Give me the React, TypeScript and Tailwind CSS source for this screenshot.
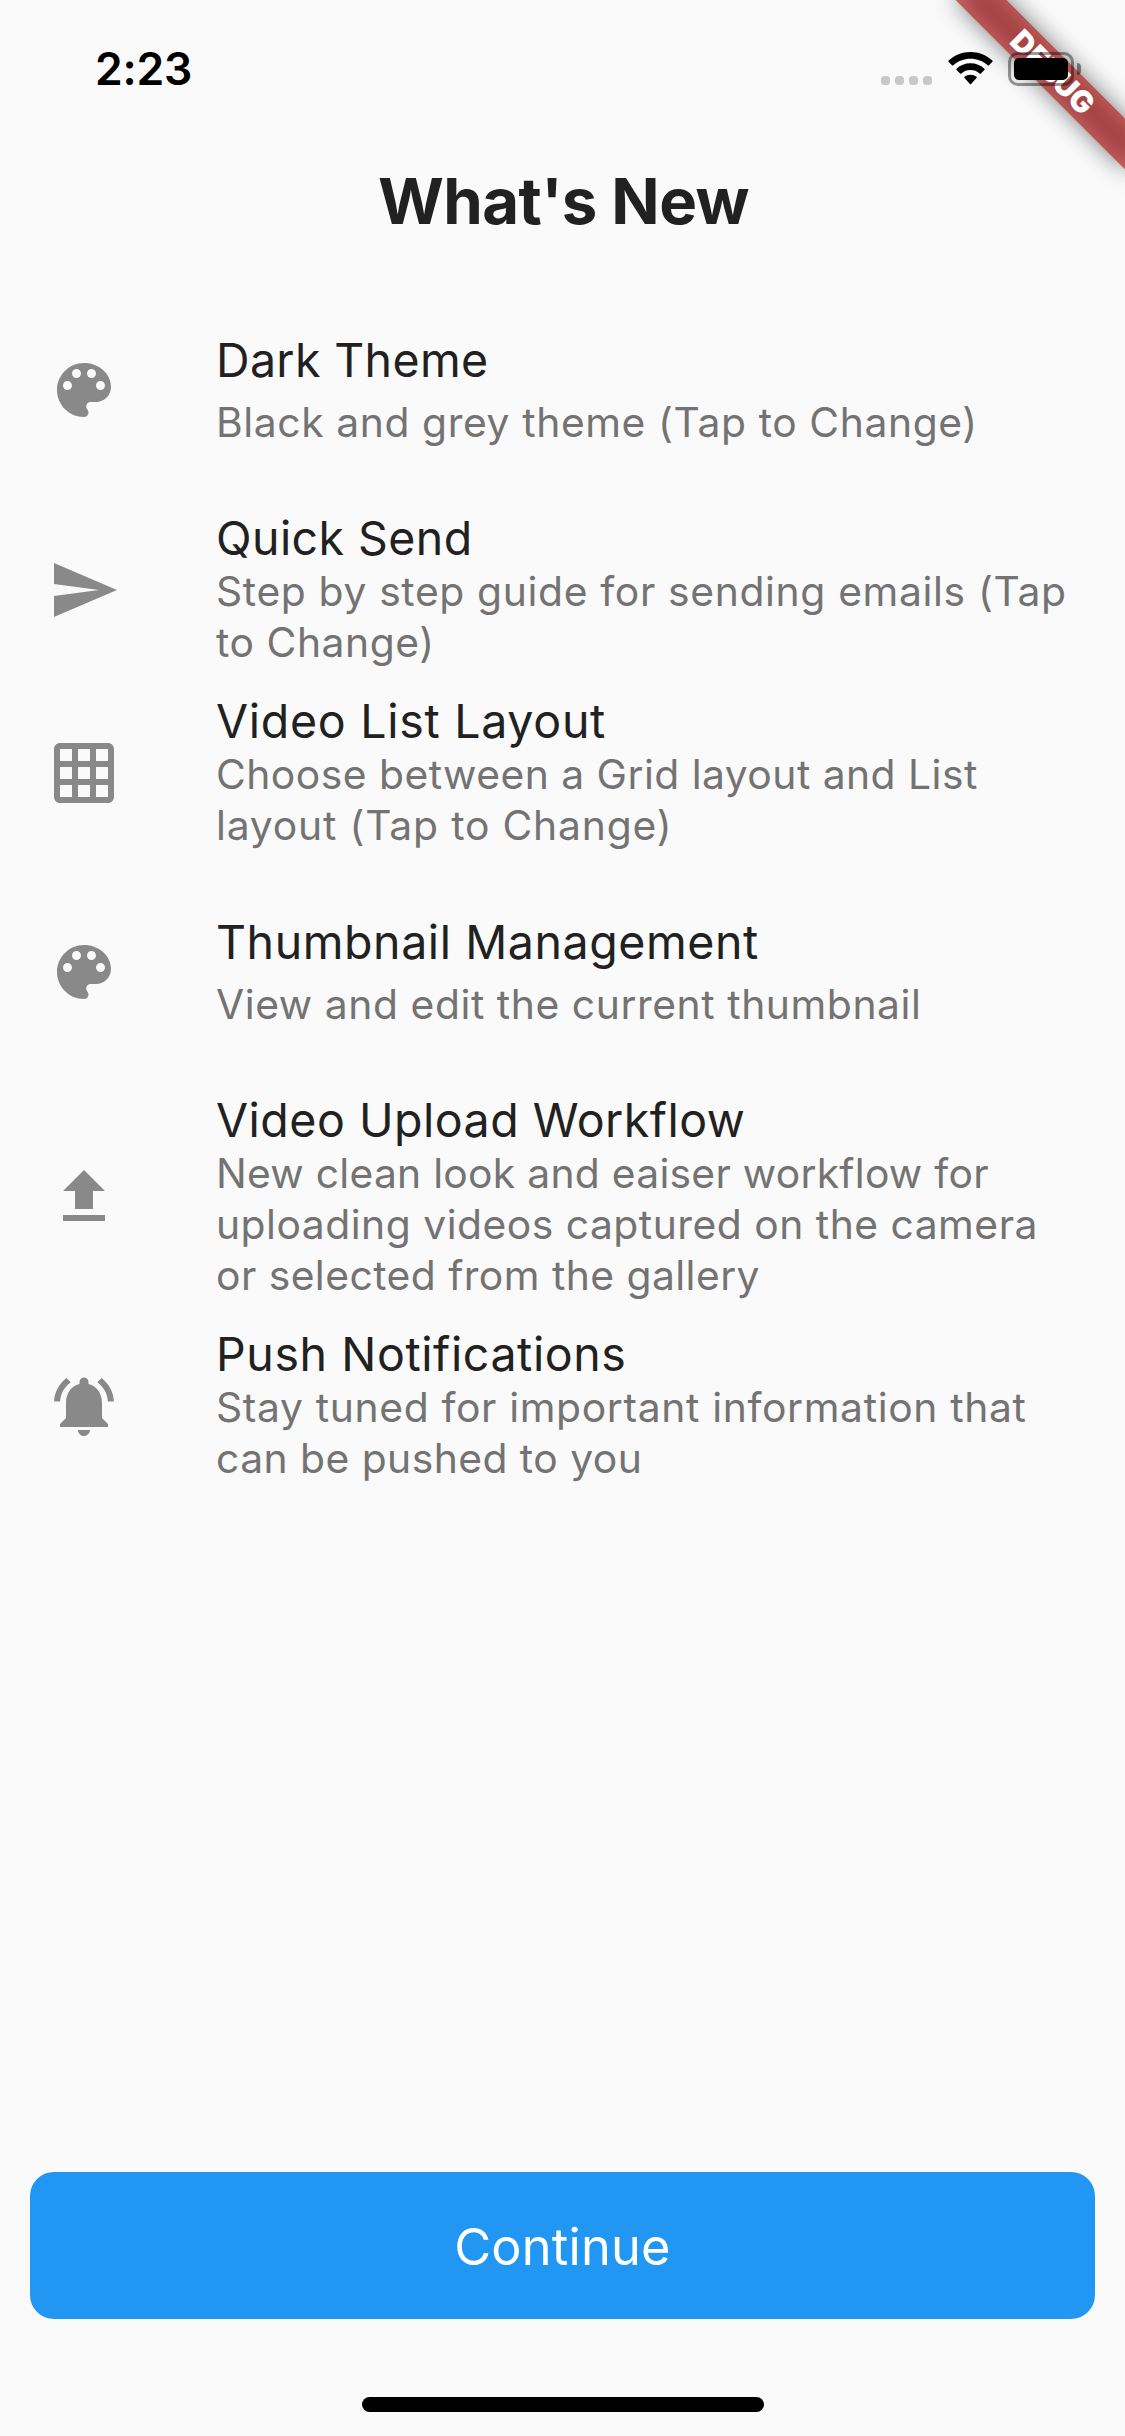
type Line = { text: string; tracking: string };

type Feature = {
  icon: string;
  title: Line;
  lines: Line[];
};

const PALETTE =
  "M12 3c-4.97 0-9 4.03-9 9s4.03 9 9 9c.83 0 1.5-.67 1.5-1.5 0-.39-.15-.74-.39-1.01-.23-.26-.38-.61-.38-.99 0-.83.67-1.5 1.5-1.5H16c2.76 0 5-2.24 5-5 0-4.42-4.03-8-9-8zm-5.5 9c-.83 0-1.5-.67-1.5-1.5S5.67 9 6.5 9 8 9.67 8 10.5 7.33 12 6.5 12zm3-4C8.67 8 8 7.33 8 6.5S8.67 5 9.5 5s1.5.67 1.5 1.5S10.33 8 9.5 8zm5 0c-.83 0-1.5-.67-1.5-1.5S13.67 5 14.5 5s1.5.67 1.5 1.5S15.33 8 14.5 8zm3 4c-.83 0-1.5-.67-1.5-1.5S16.67 9 17.5 9s1.5.67 1.5 1.5-.67 1.5-1.5 1.5z";
const SEND = "M2.01 21L23 12 2.01 3 2 10l15 2-15 2z";
const GRID =
  "M20 2H4c-1.1 0-2 .9-2 2v16c0 1.1.9 2 2 2h16c1.1 0 2-.9 2-2V4c0-1.1-.9-2-2-2zM8 20H4v-4h4v4zm0-6H4v-4h4v4zm0-6H4V4h4v4zm6 12h-4v-4h4v4zm0-6h-4v-4h4v4zm0-6h-4V4h4v4zm6 12h-4v-4h4v4zm0-6h-4v-4h4v4zm0-6h-4V4h4v4z";
const UPLOAD = "M9 16h6v-6h4l-7-7-7 7h4zm-4 2h14v2H5z";
const BELL =
  "M7.58 4.08L6.15 2.65C3.75 4.48 2.17 7.3 2.03 10.5h2c.15-2.65 1.51-4.97 3.55-6.42zm12.39 6.42h2c-.15-3.2-1.73-6.02-4.12-7.85l-1.42 1.43c2.02 1.45 3.39 3.77 3.54 6.42zM18 11c0-3.07-1.64-5.64-4.5-6.32V4c0-.83-.67-1.5-1.5-1.5s-1.5.67-1.5 1.5v.68C7.63 5.36 6 7.92 6 11v5l-2 2v1h16v-1l-2-2v-5zm-6 11c.14 0 .27-.01.4-.04.65-.14 1.18-.58 1.44-1.18.1-.24.15-.5.15-.78h-4c.01 1.1.9 2 2.01 2z";

const FEATURES: Feature[] = [
  {
    icon: PALETTE,
    title: { text: "Dark Theme", tracking: "tracking-[0.35px]" },
    lines: [{ text: "Black and grey theme (Tap to Change)", tracking: "tracking-[0.6px]" }],
  },
  {
    icon: SEND,
    title: { text: "Quick Send", tracking: "tracking-[0.42px]" },
    lines: [
      { text: "Step by step guide for sending emails (Tap", tracking: "tracking-[0.65px]" },
      { text: "to Change)", tracking: "tracking-[0.56px]" },
    ],
  },
  {
    icon: GRID,
    title: { text: "Video List Layout", tracking: "tracking-[0.72px]" },
    lines: [
      { text: "Choose between a Grid layout and List", tracking: "tracking-[0.47px]" },
      { text: "layout (Tap to Change)", tracking: "tracking-[0.82px]" },
    ],
  },
  {
    icon: PALETTE,
    title: { text: "Thumbnail Management", tracking: "tracking-[0.58px]" },
    lines: [{ text: "View and edit the current thumbnail", tracking: "tracking-[0.57px]" }],
  },
  {
    icon: UPLOAD,
    title: { text: "Video Upload Workflow", tracking: "tracking-[0.5px]" },
    lines: [
      { text: "New clean look and eaiser workflow for", tracking: "tracking-[0.27px]" },
      { text: "uploading videos captured on the camera", tracking: "tracking-[0.5px]" },
      { text: "or selected from the gallery", tracking: "tracking-[0.45px]" },
    ],
  },
  {
    icon: BELL,
    title: { text: "Push Notifications", tracking: "tracking-[0.6px]" },
    lines: [
      { text: "Stay tuned for important information that", tracking: "tracking-[0.65px]" },
      { text: "can be pushed to you", tracking: "tracking-[0.46px]" },
    ],
  },
];

function FeatureTile({ icon, title, lines }: Feature) {
  const single = lines.length === 1;
  return (
    <li
      className={`flex items-center pl-12 ${
        single ? "h-[216px]" : lines.length === 2 ? "h-[183px]" : "h-[234px]"
      }`}
    >
      <svg viewBox="0 0 24 24" className="size-[72px] shrink-0 fill-[#898989]">
        <path d={icon} />
      </svg>
      <div className={`ml-24 self-start whitespace-nowrap ${single ? "pt-[50px]" : "pt-3"}`}>
        <h2 className={`text-[46.5px] leading-[56px] text-[#212121] ${title.tracking}`}>
          {title.text}
        </h2>
        <p className={`text-[40.8px] leading-[51px] text-[#737373] ${single ? "mt-[9px]" : ""}`}>
          {lines.map((line) => (
            <span key={line.text} className={`block ${line.tracking}`}>
              {line.text}
            </span>
          ))}
        </p>
      </div>
    </li>
  );
}

function StatusBar() {
  return (
    <header className="relative z-10 flex h-[132px] items-start justify-between pl-[95px] pr-[44px] text-black">
      <time className="mt-[41px] text-[44.5px] font-semibold leading-[56px] tracking-[-0.2px]">2:23</time>
      <div className="mt-[52px] flex items-start">
        <div className="mt-6 flex gap-[5px]">
          <i className="size-[9px] rounded-[3.5px] bg-[#c8c8c8]" />
          <i className="size-[9px] rounded-[3.5px] bg-[#c8c8c8]" />
          <i className="size-[9px] rounded-[3.5px] bg-[#c8c8c8]" />
          <i className="size-[9px] rounded-[3.5px] bg-[#c8c8c8]" />
        </div>
        <svg viewBox="0 0 45 33" className="ml-4 h-[33px] w-[45px]">
          <path d="M22.5 0C31 0 38.6 3.2 44.4 8.6Q45 9.2 44.4 9.8L41 13.3Q40.3 13.9 39.7 13.3C35.1 9 29 6.7 22.5 6.7S9.9 9 5.3 13.3Q4.7 13.9 4 13.3L.6 9.8Q0 9.2 .6 8.6C6.4 3.2 14 0 22.5 0Z" />
          <path d="M22.5 11.3C27.9 11.3 32.7 13.3 36.4 16.7Q37 17.3 36.4 17.9L32.9 21.4Q32.3 22 31.6 21.4C29.1 19.2 26 18 22.5 18S15.9 19.2 13.4 21.4Q12.7 22 12.1 21.4L8.6 17.9Q8 17.3 8.6 16.7C12.3 13.3 17.1 11.3 22.5 11.3Z" />
          <path d="M22.5 22.7C24.7 22.7 26.8 23.5 28.5 24.8Q29.2 25.4 28.5 26.1L23.1 31.9Q22.5 32.5 21.9 31.9L16.5 26.1Q15.8 25.4 16.5 24.8C18.2 23.5 20.3 22.7 22.5 22.7Z" />
        </svg>
        <div className="ml-[15px] flex items-center gap-[3px]">
          <div className="h-[34px] w-[66px] rounded-[10px] border-3 border-black/40 p-[3px]">
            <div className="h-[22px] w-[54px] rounded-[5px] bg-black" />
          </div>
          <div className="h-3 w-1 rounded-r-full bg-black/45" />
        </div>
      </div>
    </header>
  );
}

/* Diagonal ribbon laid over the top right corner */
function DebugBanner() {
  return (
    <div className="pointer-events-none absolute right-0 top-0 size-[240px] overflow-hidden">
      <div className="absolute left-[47.9px] top-[54.1px] h-9 w-[240px] rotate-45 bg-black/50 blur-[12px]" />
      <div className="absolute left-[47.9px] top-[54.1px] flex h-9 w-[240px] rotate-45 items-center justify-center bg-[#b71c1c]/63 text-[30px] font-black leading-none text-white">
        DEBUG
      </div>
    </div>
  );
}

export default function App() {
  return (
    <div className="relative flex h-[2436px] w-[1125px] flex-col overflow-hidden bg-[#fafafa] font-['Inter',sans-serif]">
      <DebugBanner />
      <StatusBar />
      <h1 className="mt-[31px] h-[119px] pl-[2px] text-center text-[63.5px] font-bold leading-[76px] tracking-[-0.55px] text-[#212121]">
        What's New
      </h1>
      <ul>
        {FEATURES.map((feature) => (
          <FeatureTile key={feature.title.text} {...feature} />
        ))}
      </ul>
      <footer className="mt-auto flex flex-col px-[30px] pb-6">
        <button className="h-[147px] rounded-3xl bg-[#2196f3] pt-[2px] text-[50.5px] tracking-[0.2px] text-white">
          Continue
        </button>
        <div className="mx-auto mt-[78px] h-[15px] w-[402px] rounded-full bg-black" />
      </footer>
    </div>
  );
}
